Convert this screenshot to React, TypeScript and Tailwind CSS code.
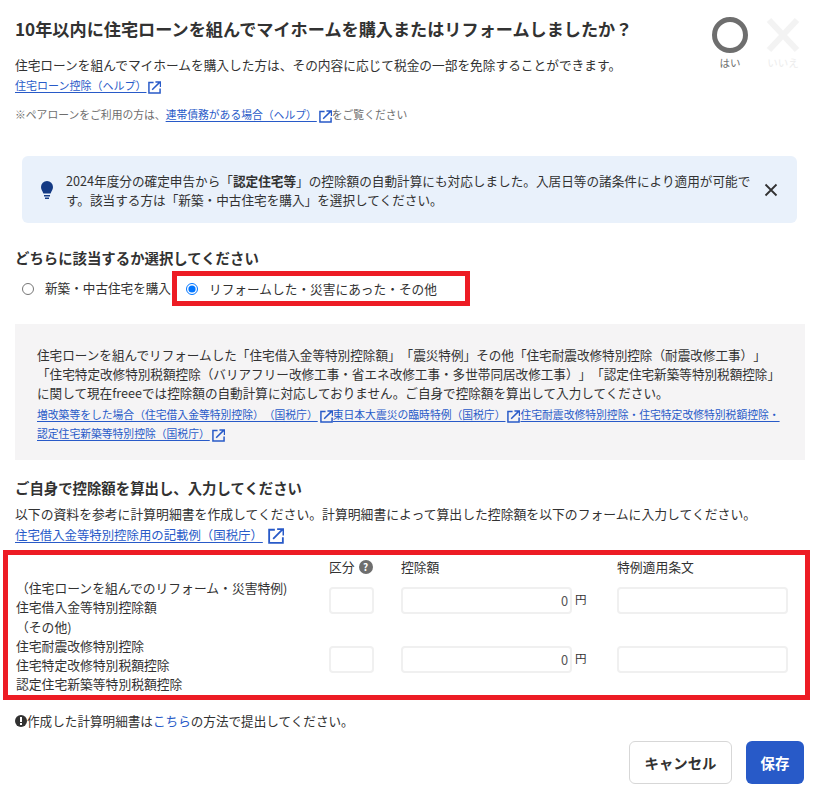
import React from 'react';

function ExtIcon({ size = 13 }: { size?: number }) {
  return (
    <svg
      width={size}
      height={size}
      viewBox="0 0 14 14"
      fill="none"
      stroke="#285ac8"
      strokeWidth="1.6"
      className={`inline-block align-[-4px] ${size > 13 ? 'ml-[5px]' : 'ml-[2px]'}`}
    >
      <path d="M6 1.500H1v11.500h12V8" />
      <path d="M4.500 9.500 12.500 1.500M8 1h5.500v5.500" />
    </svg>
  );
}

function DocLink({ children, size }: { children: React.ReactNode; size?: number }) {
  return (
    <span>
      <a className="text-[#285ac8] underline underline-offset-2">{children}</a>
      <ExtIcon size={size} />
    </span>
  );
}

function Field({ className }: { className: string }) {
  return <div className={`h-[27px] rounded-[4px] border-2 border-[#f0f0f0] bg-white ${className}`} />;
}

function AmountField() {
  return (
    <div className="flex items-center w-[171px] h-[27px] rounded-[4px] border-2 border-[#f0f0f0] bg-white justify-end pr-[2px] text-[12.800px] text-[#555] relative">
      0
      <span className="absolute left-[172px] top-[2px] text-[11.500px] text-[#323232]">円</span>
    </div>
  );
}

function FormRow({ lines, spacer }: { lines: string[]; spacer: string }) {
  return (
    <div className="flex items-center">
      <div className="w-[314px] pl-[1px] text-[12.800px] leading-[19.300px] text-[#323232]">
        {lines.map((line) => (
          <div key={line} className="whitespace-nowrap">{line}</div>
        ))}
      </div>
      <div className={`flex ${spacer}`}>
        <Field className="w-[45px]" />
        <div className="ml-[27px]">
          <AmountField />
        </div>
        <Field className="ml-[45px] w-[171px]" />
      </div>
    </div>
  );
}

export default function App() {
  return (
    <div className="font-['Noto_Sans_CJK_JP',sans-serif] [text-spacing-trim:space-all] w-[823px] h-[804px] overflow-hidden bg-white text-[#323232] pl-[15px] pr-[19px] pt-[17px]">
      <div className="flex justify-between h-[119px]">
        <div>
          <h1 className="text-[17.150px] leading-[24px] font-bold whitespace-nowrap">
            10年以内に住宅ローンを組んでマイホームを購入またはリフォームしましたか？
          </h1>
          <p className="mt-[14px] text-[12.700px] leading-[20px] whitespace-nowrap">
            住宅ローンを組んでマイホームを購入した方は、その内容に応じて税金の一部を免除することができます。
          </p>
          <p className="text-[11px] leading-[20px]">
            <DocLink>住宅ローン控除（ヘルプ）</DocLink>
          </p>
          <p className="mt-[10px] text-[10.800px] leading-[18px] text-[#6e6e6e] whitespace-nowrap">
            ※ペアローンをご利用の方は、<DocLink>連帯債務がある場合（ヘルプ）</DocLink>をご覧ください
          </p>
        </div>
        <div className="flex gap-[17px] text-center mr-[3px] shrink-0">
          <div className="w-[36px] flex flex-col items-center">
            <div className="w-[36px] h-[36px] rounded-full border-[5.500px] border-[#6e6e6e]" />
            <span className="text-[10.500px] text-[#6e6e6e] mt-[2px] whitespace-nowrap">はい</span>
          </div>
          <div className="w-[36px] flex flex-col items-center">
            <svg width="34" height="36" viewBox="0 0 34 36" stroke="#f3f3f3" strokeWidth="6">
              <path d="M3 3 31 33M31 3 3 33" />
            </svg>
            <span className="text-[10.500px] text-[#ededed] mt-[2px] whitespace-nowrap">いいえ</span>
          </div>
        </div>
      </div>

      <div className="mt-[20px] ml-[7px] w-[775px] h-[67px] rounded-md bg-[#e9f1fb] flex items-center pl-[18px] pr-[18px]">
        <svg width="14" height="20" viewBox="0 0 14 20" fill="#143a84" className="shrink-0">
          <path d="M7 1a6 6 0 0 0-6 6c0 2.400 1.500 4 2.400 6.500h7.200C11.500 11 13 9.400 13 7a6 6 0 0 0-6-6z" />
          <rect x="4" y="15" width="6" height="1.500" />
          <rect x="5" y="17.500" width="4" height="1.500" />
        </svg>
        <p className="ml-[12px] w-[690px] text-[12.630px] leading-[19px]">
          2024年度分の確定申告から「<b>認定住宅等</b>」の控除額の自動計算にも対応しました。入居日等の諸条件により適用が可能です。該当する方は「新築・中古住宅を購入」を選択してください。
        </p>
        <svg width="14" height="14" viewBox="0 0 14 14" stroke="#323232" strokeWidth="1.800" className="ml-auto mr-[1px] shrink-0">
          <path d="M1.500 1.500 12.500 12.500M12.500 1.500 1.500 12.500" />
        </svg>
      </div>

      <h2 className="mt-[25px] text-[14.400px] leading-[20px] font-bold">どちらに該当するか選択してください</h2>

      <div className="mt-[3px] flex items-center h-[35px]">
        <input type="radio" readOnly className="ml-[7px] m-0 w-[12px] h-[12px]" />
        <span className="ml-[11px] w-[127px] text-[12.600px] whitespace-nowrap">新築・中古住宅を購入</span>
        <div className="w-[298px] h-[35px] border-[5px] border-[#ed1c24] flex items-center pl-[9px] text-[12.700px]">
          <input type="radio" readOnly checked className="m-0 w-[12px] h-[12px]" />
          <span className="ml-[11px]">リフォームした・災害にあった・その他</span>
        </div>
      </div>

      <div className="mt-[18px] w-[790px] h-[136px] bg-[#f5f4f5] pl-[22px] pt-[21px]">
        <p className="text-[12.600px] leading-[19px] whitespace-nowrap">
          住宅ローンを組んでリフォームした「住宅借入金等特別控除額」「震災特例」その他「住宅耐震改修特別控除（耐震改修工事）」
          <br />
          「住宅特定改修特別税額控除（バリアフリー改修工事・省エネ改修工事・多世帯同居改修工事）」「認定住宅新築等特別税額控除」
          <br />
          に関して現在freeeでは控除額の自動計算に対応しておりません。ご自身で控除額を算出して入力してください。
        </p>
        <p className="mt-[3px] text-[10.800px] leading-[19px] whitespace-nowrap">
          <DocLink>増改築等をした場合（住宅借入金等特別控除）（国税庁）</DocLink>
          <DocLink>東日本大震災の臨時特例（国税庁）</DocLink>
          <DocLink>
            住宅耐震改修特別控除・住宅特定改修特別税額控除・
            <br />
            認定住宅新築等特別控除（国税庁）
          </DocLink>
        </p>
      </div>

      <h2 className="mt-[18px] text-[14.400px] leading-[20px] font-bold">ご自身で控除額を算出し、入力してください</h2>
      <p className="mt-[6px] text-[12.830px] leading-[20px] whitespace-nowrap">
        以下の資料を参考に計算明細書を作成してください。計算明細書によって算出した控除額を以下のフォームに入力してください。
      </p>
      <p className="text-[12.400px] leading-[22px]">
        <DocLink size={16}>住宅借入金等特別控除用の記載例（国税庁）</DocLink>
      </p>

      <div className="mt-[4px] ml-[-12px] w-[807px] h-[150px] border-[5px] border-[#ed1c24] pl-[7px]">
        <div className="flex items-center h-[23px] pl-[314px] text-[12.800px]">
          <span className="w-[45px] flex items-center gap-[4px] whitespace-nowrap">
            区分
            <span className="w-[14px] h-[14px] shrink-0 rounded-full bg-[#6e6e6e] text-white text-[10px] font-bold flex items-center justify-center">?</span>
          </span>
          <span className="ml-[27px] w-[171px]">控除額</span>
          <span className="ml-[45px]">特例適用条文</span>
        </div>
        <FormRow spacer="mt-[7px]" lines={['（住宅ローンを組んでのリフォーム・災害特例)', '住宅借入金等特別控除額']} />
        <FormRow spacer="mt-[8px]" lines={['（その他)', '住宅耐震改修特別控除', '住宅特定改修特別税額控除', '認定住宅新築等特別税額控除']} />
      </div>

      <p className="mt-[11px] text-[12.600px] leading-[20px] flex items-center">
        <svg width="12" height="12" viewBox="0 0 12 12" className="shrink-0">
          <circle cx="6" cy="6" r="6" fill="#323232" />
          <rect x="5" y="2" width="2" height="5" fill="#fff" />
          <rect x="5" y="8" width="2" height="2" fill="#fff" />
        </svg>
        作成した計算明細書は<a className="text-[#285ac8]">こちら</a>の方法で提出してください。
      </p>

      <div className="mt-[10px] flex justify-end gap-[14px]">
        <button className="w-[103px] h-[43px] rounded-md border border-[#d7d7d7] bg-white text-[14.400px] font-bold">キャンセル</button>
        <button className="w-[58px] h-[43px] rounded-md bg-[#285ac8] text-white text-[14.400px] font-bold">保存</button>
      </div>
    </div>
  );
}
